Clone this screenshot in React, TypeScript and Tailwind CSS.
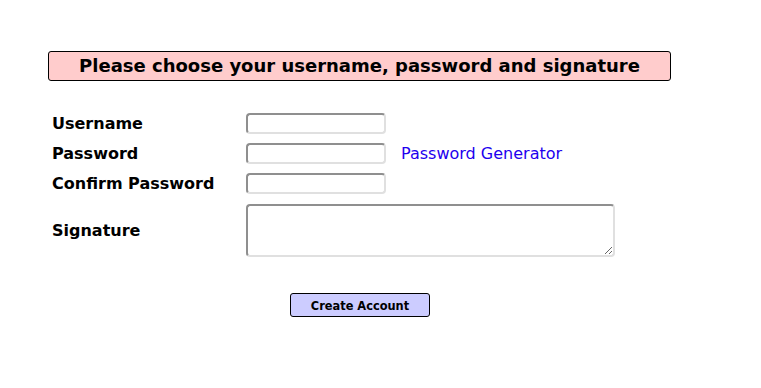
export default function App() {
  const field =
    "h-[21px] w-[140px] rounded-[4px] border-2 border-t-[#8f8f8f] border-l-[#8f8f8f] border-r-[#e0e0e0] border-b-[#e0e0e0] bg-white";

  return (
    <div className="min-h-[388px] w-[761px] bg-white font-['DejaVu_Sans',sans-serif] text-black">
      <div className="pl-[48px] pt-[51px]">
        <div className="flex h-[30px] w-[623px] items-center justify-center rounded-[3px] border border-black bg-[#ffcccc] pb-[1px] text-[18px] font-bold">
          Please choose your username, password and signature
        </div>
      </div>

      <div className="mt-[32px] grid grid-cols-[194px_auto] items-center gap-y-[9px] pl-[52px] text-[16px] leading-[21px] font-bold">
        <span>Username</span>
        <input className={field} />
        <span>Password</span>
        <div className="flex items-center gap-[15px]">
          <input className={field} />
          <a href="#" className="text-[16px] font-normal text-[#2200ee]">
            Password Generator
          </a>
        </div>
        <span>Confirm Password</span>
        <input className={field} />
        <span className="mt-[1px]">Signature</span>
        <textarea className="mt-[1px] h-[53px] w-[369px] resize rounded-[4px] border-2 border-t-[#8f8f8f] border-l-[#8f8f8f] border-r-[#e0e0e0] border-b-[#e0e0e0] bg-white" />
      </div>

      <div className="mt-[36px] flex pl-[290px]">
        <button className="h-[24px] w-[140px] rounded-[3px] border border-black bg-[#ccccff] pt-[2px] text-[11.4px] leading-[16px] font-bold">
          Create Account
        </button>
      </div>
    </div>
  );
}
